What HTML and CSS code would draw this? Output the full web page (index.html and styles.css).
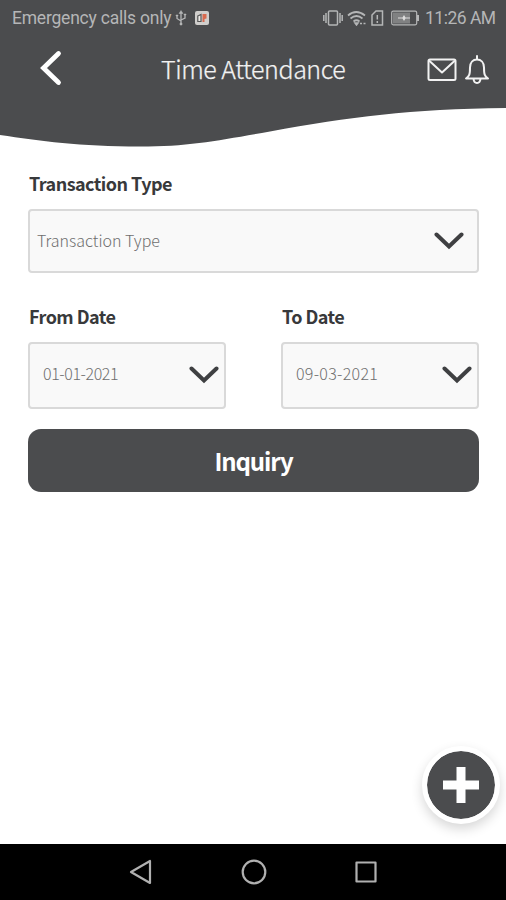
FILE: index.html
```html
<!DOCTYPE html>
<html lang="en">
<head>
<meta charset="utf-8">
<title>Time Attendance</title>
<link rel="stylesheet" href="styles.css">
</head>
<body>
<header class="header">
  <div class="status">
    <span class="carrier">Emergency calls only</span>
    <svg class="usb" width="12" height="16" viewBox="0 0 12 16" fill="none" stroke="currentColor" stroke-width="1.3"><path d="M6 2v11M2 6v2.500l4 2.500M10 5v3L6 10"/><path d="M4 3.500 6 .5l2 3zM5 13h2v2H5zM1 5h2v1H1zM9 4h2v1H9z" fill="currentColor" stroke-width=".5"/></svg>
    <svg class="app" width="14" height="14" viewBox="0 0 14 14"><rect width="14" height="14" rx="2" fill="#d0cecc"/><path d="M2.800 5 6 3.500v7H2.800z" fill="#ece9e6" stroke="#555" stroke-width="1.200"/><path d="M7.500 3h4v4.500L9.500 8v3h-2z" fill="#d8694e"/></svg>
    <div class="system">
      <svg width="20" height="16" viewBox="0 0 20 16" fill="none" stroke="currentColor" stroke-width="1.500"><rect x="5.500" y="1" width="9" height="14" rx="1"/><path d="M3 3v10M17 3v10M.8 5v6M19.200 5v6"/></svg>
      <svg width="20" height="16" viewBox="0 0 20 16" fill="none" stroke="currentColor" stroke-width="1.700"><path d="M1 5.500q8-7 17 0M3.500 8.500q6-5 12 0M6.500 11.500q3-2.500 6 0"/><path d="M8 13h3l-1.500 2zM13 13.500h2M16.500 13.500h2" fill="currentColor" stroke-width="1.500"/></svg>
      <svg width="13" height="16" viewBox="0 0 13 16" fill="none" stroke="currentColor" stroke-width="1.500"><path d="M1 5 5 1h6.500v14H1zM6.300 5v4.500M6.300 11v2"/></svg>
      <svg class="battery" width="29" height="16" viewBox="0 0 29 16"><rect x=".7" y="1.200" width="25" height="13.600" rx="1.500" fill="none" stroke="currentColor" stroke-width="1.200"/><path d="M2 2.500h17v11H2z" fill="#808182"/><path d="M27 5v6" stroke="currentColor" stroke-width="2"/><path d="M7 7.400h4.500L13 5l1.500 2.400H19v1.200h-4.500L13 11l-1.500-2.400H7z" fill="#ddd"/></svg>
      <span class="time">11:26 AM</span>
    </div>
  </div>
  <div class="toolbar">
    <svg class="back" width="22" height="36" viewBox="0 0 22 36" fill="none" stroke="#fff" stroke-width="4.800" stroke-linecap="round"><path d="M18.500 3.500 3.500 18l15 14.500" stroke-linejoin="miter"/></svg>
    <h1 class="title">Time Attendance</h1>
    <div class="actions">
      <svg width="30" height="24" viewBox="0 0 30 24" fill="none" stroke="#f2f2f2" stroke-width="2" stroke-linejoin="round"><rect x="1.500" y="1.500" width="27" height="20.500" rx="1.500"/><path d="m2 2.500 13 12 13-12"/></svg>
      <svg width="26" height="30" viewBox="0 0 26 30" fill="none" stroke="#f2f2f2" stroke-width="2" stroke-linecap="round" stroke-linejoin="round"><path d="M13 1v3M2 23.500h22c-3.500-2.500-4-4-4-11C20 7.500 17 4.500 13 4.500s-7 3-7 8c0 7-.5 8.500-4 11zM9.500 24q.5 4 3.500 4t3.500-4"/></svg>
    </div>
  </div>
  <svg class="wave" width="506" height="50" viewBox="0 0 506 50"><path d="M0 0h506v8C410 9 350 17 270 31.500 220 40 190 46.500 140 46.500 80 46.500 40 41 0 35z" fill="#4b4c4e"/></svg>
</header>
<main class="form">
  <label class="label">Transaction Type</label>
  <div class="select wide"><span class="value">Transaction Type</span><svg width="30" height="18" viewBox="0 0 30 18" class="chevron"><path d="m2.500 2.500 12.500 12 12.500-12"/></svg></div>
  <div class="dates">
    <div class="field">
      <label class="label">From Date</label>
      <div class="select date"><span class="value from">01-01-2021</span><svg width="30" height="18" viewBox="0 0 30 18" class="chevron"><path d="m2.500 2.500 12.500 12 12.500-12"/></svg></div>
    </div>
    <div class="field">
      <label class="label">To Date</label>
      <div class="select date"><span class="value to">09-03-2021</span><svg width="30" height="18" viewBox="0 0 30 18" class="chevron"><path d="m2.500 2.500 12.500 12 12.500-12"/></svg></div>
    </div>
  </div>
  <button class="submit">Inquiry</button>
</main>
<button class="fab" aria-label="Add"><svg width="36" height="36" viewBox="0 0 36 36"><path d="M18 0v36M0 18h36" stroke="#fff" stroke-width="9"/></svg></button>
<nav class="nav">
  <svg width="24" height="26" viewBox="0 0 24 26"><path d="M21 2v22L2 13z"/></svg>
  <svg width="26" height="26" viewBox="0 0 26 26"><circle cx="13" cy="13" r="11.300"/></svg>
  <svg width="24" height="24" viewBox="0 0 24 24"><path d="M2.500 2.500h19v19h-19z"/></svg>
</nav>
</body>
</html>
```
FILE: styles.css
```css
* { box-sizing: border-box; }
body {
  margin: 0;
  width: 506px;
  height: 900px;
  overflow: hidden;
  display: flex;
  flex-direction: column;
  background: #fff;
  font-family: "Noto Sans CJK SC", "Open Sans", sans-serif;
  color: #38393b;
}
svg { display: block; flex: none; }
.status {
  display: flex;
  align-items: center;
  height: 36px;
  padding: 0 11px 0 12px;
  background: #4b4c4e;
  color: #b5b6b7;
  font: 17.5px/36px Roboto, sans-serif;
  white-space: nowrap;
}
.carrier { width: 159px; letter-spacing: -.22px; }
.usb { margin-left: 4px; }
.app { margin-left: 8px; }
.system { display: flex; align-items: center; margin-left: auto; gap: 4px; }
.battery { margin-left: 3px; }
.time { width: 70px; margin-left: 1px; letter-spacing: -.5px; }
.toolbar {
  display: grid;
  grid-template-columns: 121px 1fr 79px;
  align-items: center;
  height: 64px;
  padding-left: 40px;
  background: #4b4c4e;
}
.title {
  margin: 0;
  color: #f2f2f2;
  font-size: 25px;
  font-weight: 300;
  line-height: 62px;
  letter-spacing: -.45px;
  -webkit-text-stroke: .25px #f2f2f2;
  white-space: nowrap;
}
.actions { display: flex; align-items: center; gap: 7px; padding-top: 3px; }
.form { flex: 1; padding: 20px 27px 0 28px; }
.label {
  display: block;
  height: 39px;
  padding-left: 1px;
  font-size: 18px;
  font-weight: 700;
  line-height: 27px;
  letter-spacing: -.55px;
  white-space: nowrap;
}
.select {
  display: flex;
  align-items: center;
  justify-content: space-between;
  border: 2px solid #d9d9d9;
  border-radius: 4px;
  background: #f9f9f9;
}
.value {
  padding-bottom: 3px;
  font-size: 16px;
  font-weight: 300;
  color: #6e6e6e;
  white-space: nowrap;
}
.from { letter-spacing: -.4px; }
.to { letter-spacing: .3px; }
.wide { height: 64px; padding: 0 13px 0 7px; }
.date { height: 67px; padding: 0 5px 0 13px; }
.date .value { padding-bottom: 5px; }
.date .chevron { margin-bottom: 2px; }
.chevron { fill: none; stroke: #3f4042; stroke-width: 4; stroke-linecap: round; }
.dates {
  display: grid;
  grid-template-columns: 198px 198px;
  justify-content: space-between;
  margin-top: 30px;
}
.submit {
  display: block;
  width: 451px;
  height: 63px;
  margin-top: 20px;
  padding: 0;
  border: 0;
  border-radius: 13px;
  background: #4b4c4e;
  color: #fff;
  font: 700 24px/58px "Noto Sans CJK SC", sans-serif;
  letter-spacing: -1.1px;
}
.fab {
  position: absolute;
  left: 422px;
  top: 746px;
  display: grid;
  place-items: center;
  width: 78px;
  height: 78px;
  padding: 0;
  border: 5px solid #fff;
  border-radius: 50%;
  background: #4b4c4e;
  background-clip: padding-box;
  box-shadow: 0 5px 12px rgba(0, 0, 0, .16);
}
.nav {
  display: grid;
  grid-template-columns: 112px 113px 112px;
  justify-content: center;
  place-items: center;
  height: 56px;
  padding-left: 1px;
  background: #000;
}
.nav svg { fill: none; stroke: #b0b0b0; stroke-width: 2.2; stroke-linejoin: round; }
```
